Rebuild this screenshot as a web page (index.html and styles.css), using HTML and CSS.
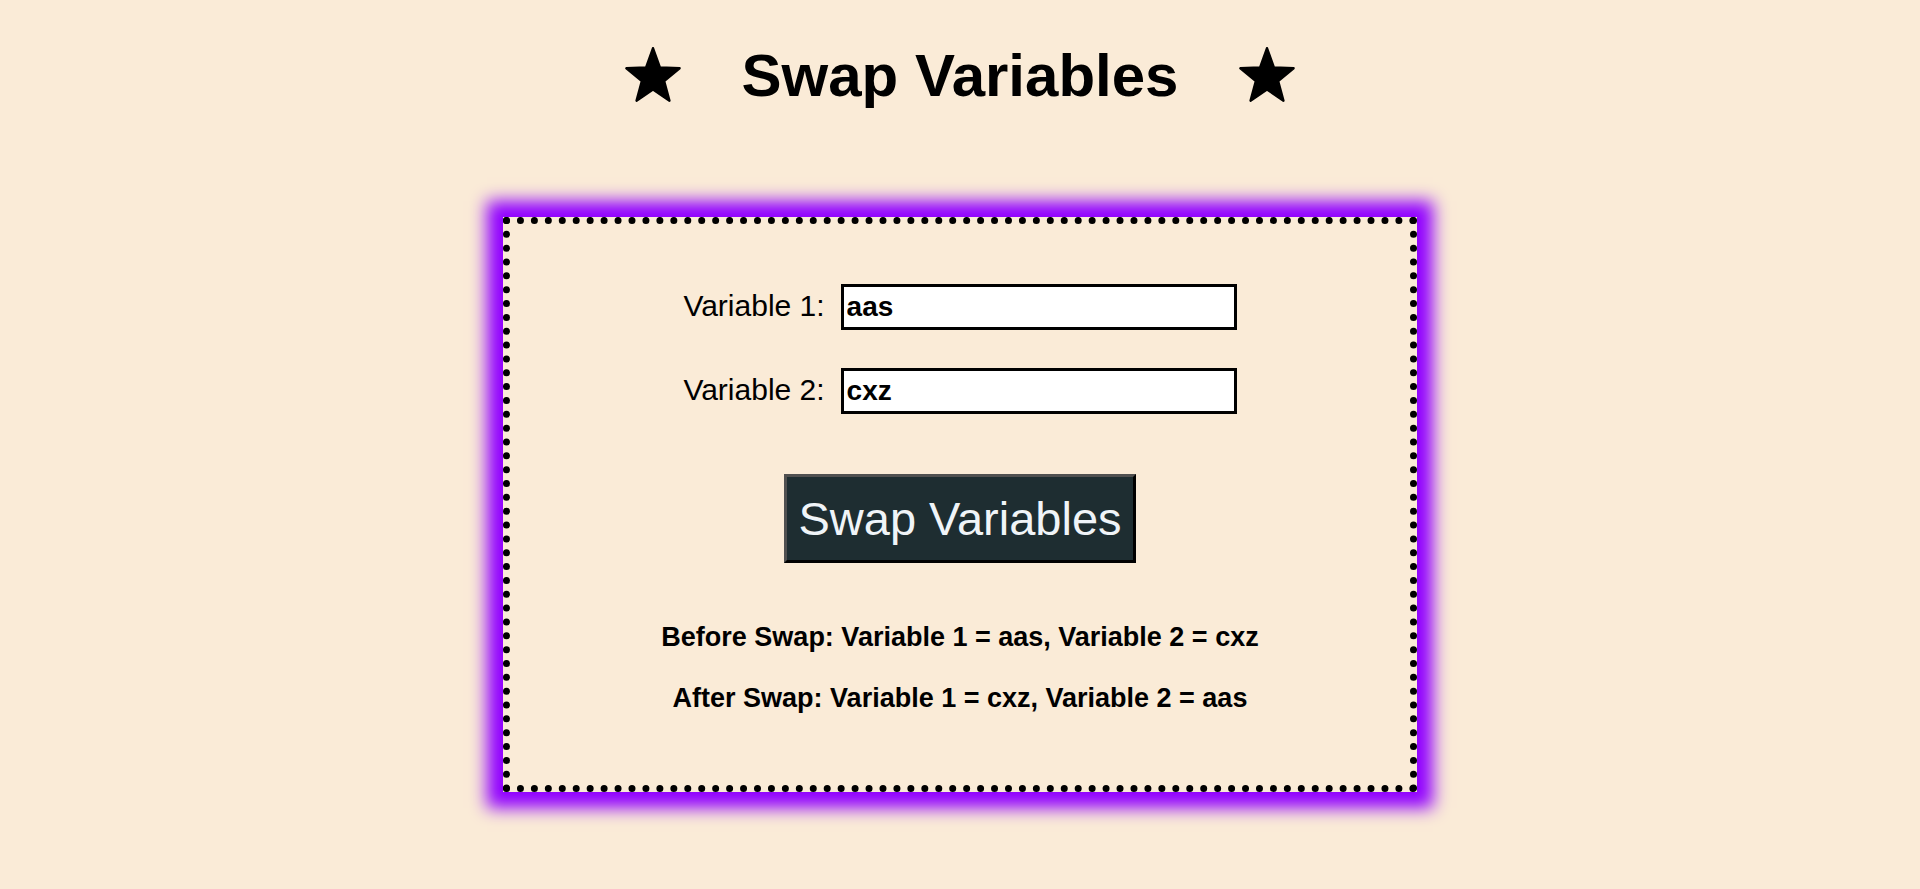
FILE: index.html
```html
<!DOCTYPE html>
<html>
<head>
<meta charset="utf-8">
<title>Swap Variables</title>
<link rel="stylesheet" href="styles.css">
</head>
<body>
<div class="page">
<header class="header">
  <svg class="star" viewBox="2 0 96 91" preserveAspectRatio="none" aria-hidden="true"><polygon points="50,2 61.85,33.69 95.65,35.17 69.17,56.23 78.21,88.83 50,70.16 21.79,88.83 30.83,56.23 4.35,35.17 38.15,33.69"/></svg>
  <h1 class="title">Swap Variables</h1>
  <svg class="star" viewBox="2 0 96 91" preserveAspectRatio="none" aria-hidden="true"><polygon points="50,2 61.85,33.69 95.65,35.17 69.17,56.23 78.21,88.83 50,70.16 21.79,88.83 30.83,56.23 4.35,35.17 38.15,33.69"/></svg>
</header>
<main class="card">
  <div class="row">
    <label class="label" for="v1">Variable 1:</label>
    <input class="field" id="v1" type="text" value="aas">
  </div>
  <div class="row row-second">
    <label class="label" for="v2">Variable 2:</label>
    <input class="field" id="v2" type="text" value="cxz">
  </div>
  <button class="swap-btn" type="button">Swap Variables</button>
  <p class="result result-before">Before Swap: Variable 1 = aas, Variable 2 = cxz</p>
  <p class="result result-after">After Swap: Variable 1 = cxz, Variable 2 = aas</p>
</main>
</div>
</body>
</html>
```
FILE: styles.css
```css
html, body {
  margin: 0;
  padding: 0;
  background: #faebd7;
}
body {
  font-family: "Liberation Sans", Arial, sans-serif;
  color: #000;
}
.page {
  min-height: 889px;
  box-sizing: border-box;
  padding-top: 42px;
  overflow: hidden;
}
.header {
  display: flex;
  justify-content: center;
  align-items: center;
  gap: 61px;
  height: 68px;
}
.star {
  width: 56px;
  height: 55px;
  fill: #000;
  stroke: #000;
  stroke-width: 4;
  stroke-linejoin: round;
  margin-top: -3px;
}
.title {
  margin: 0;
  font-size: 60px;
  font-weight: bold;
  line-height: 68px;
}
.card {
  width: 914px;
  box-sizing: border-box;
  margin: 107px auto 0;
  border: 7px dotted #000;
  box-shadow: 0 0 16px 16px #9100ff;
  padding: 60px 0 71px;
  display: flex;
  flex-direction: column;
  align-items: center;
}
.row {
  display: flex;
  align-items: center;
  gap: 16px;
  height: 46px;
}
.row-second {
  margin-top: 38px;
}
.label {
  font-size: 30px;
  line-height: 34px;
  margin-top: -2px;
}
.field {
  width: 396px;
  height: 46px;
  box-sizing: border-box;
  border: 3px solid #000;
  background: #fff;
  padding: 0 3px;
  margin: 0;
  font-family: "Liberation Sans", Arial, sans-serif;
  font-size: 28px;
  font-weight: bold;
  color: #000;
  outline: none;
}
.swap-btn {
  margin-top: 60px;
  background: #1e2d31;
  color: #f0f4f8;
  font-family: "Liberation Sans", Arial, sans-serif;
  font-size: 47px;
  line-height: 54px;
  padding: 15px 11px 14px;
  border-style: solid;
  border-width: 3px;
  border-color: #505050 #000 #000 #505050;
  cursor: pointer;
}
.result {
  margin: 0;
  font-size: 27px;
  font-weight: bold;
  line-height: 31px;
  text-align: center;
}
.result-before {
  margin-top: 59px;
}
.result-after {
  margin-top: 30px;
}
```
